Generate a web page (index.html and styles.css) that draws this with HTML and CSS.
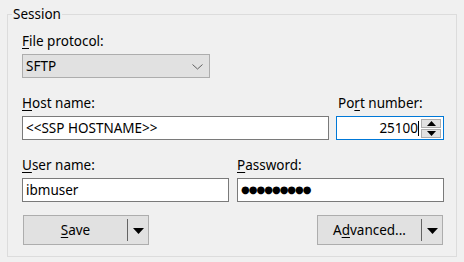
FILE: index.html
```html
<!DOCTYPE html>
<html>
<head>
    <meta charset="UTF-8">
    <title>Session</title>
    <link rel="stylesheet" href="styles.css">
</head>
<body>
    <fieldset class="session">
        <legend>Session</legend>

        <div class="field">
            <label><u>F</u>ile protocol:</label>
            <div class="combo">
                <span>SFTP</span>
                <svg class="chevron" width="11" height="6" viewBox="0 0 11 6"><path d="M0.5 0.5 L5.5 5 L10.5 0.5" fill="none" stroke="#606060" stroke-width="1"/></svg>
            </div>
        </div>

        <div class="row host-row">
            <div class="field">
                <label><u>H</u>ost name:</label>
                <div class="edit">&lt;&lt;SSP HOSTNAME&gt;&gt;</div>
            </div>
            <div class="field">
                <label class="port-label">Po<u>r</u>t number:</label>
                <div class="edit port">
                    <span class="port-value">25100<i class="caret"></i></span>
                    <div class="spin">
                        <div class="spin-btn"><svg width="9" height="5" viewBox="0 0 9 5"><path d="M0 5 L4.5 0 L9 5 Z" fill="#000"/></svg></div>
                        <div class="spin-btn"><svg width="9" height="5" viewBox="0 0 9 5"><path d="M0 0 L4.5 5 L9 0 Z" fill="#000"/></svg></div>
                    </div>
                </div>
            </div>
        </div>

        <div class="row user-row">
            <div class="field">
                <label><u>U</u>ser name:</label>
                <div class="edit">ibmuser</div>
            </div>
            <div class="field">
                <label><u>P</u>assword:</label>
                <div class="edit dots">&#9679;&#9679;&#9679;&#9679;&#9679;&#9679;&#9679;&#9679;&#9679;</div>
            </div>
        </div>

        <div class="buttons">
            <div class="split-btn">
                <span class="btn-main"><u>S</u>ave</span>
                <span class="btn-arrow"><svg width="11" height="6" viewBox="0 0 11 6"><path d="M0 0 L5.5 6 L11 0 Z" fill="#000"/></svg></span>
            </div>
            <div class="split-btn">
                <span class="btn-main">A<u>d</u>vanced...</span>
                <span class="btn-arrow"><svg width="11" height="6" viewBox="0 0 11 6"><path d="M0 0 L5.5 6 L11 0 Z" fill="#000"/></svg></span>
            </div>
        </div>
    </fieldset>
</body>
</html>
```

FILE: styles.css
```css
body {
    margin: 0;
    padding-top: 6px;
    background-color: #f0f0f0;
    font-family: "Noto Sans", "Open Sans", sans-serif;
    font-size: 13.5px;
    color: #000;
}

.session {
    margin: 0 7px 0 7px;
    border: 1px solid #dcdcdc;
    padding: 11px 12px 11px 14px;
}

.session legend {
    padding: 0 1px;
    margin-left: -10px;
    line-height: 16px;
}

label {
    display: block;
    line-height: 16px;
    margin-bottom: 5px;
}

u {
    text-decoration-thickness: 1px;
    text-underline-offset: 2px;
}

.combo {
    width: 188px;
    height: 24px;
    box-sizing: border-box;
    border: 1px solid #adadad;
    background-color: #e1e1e1;
    display: flex;
    align-items: center;
    justify-content: space-between;
    padding: 0 6px 0 3px;
}

.chevron {
    margin-top: 1px;
}

.row {
    display: flex;
    margin-top: 17px;
}

.host-row {
    gap: 7px;
}

.host-row .field:first-child {
    width: 307px;
}

.host-row .field:last-child {
    width: 108px;
}

.port-label {
    padding-left: 2px;
}

.user-row {
    gap: 8px;
}

.user-row .field {
    width: 207px;
}

.edit {
    height: 24px;
    box-sizing: border-box;
    border: 1px solid #7a7a7a;
    background-color: #fff;
    padding: 0 3px;
    line-height: 22px;
    white-space: nowrap;
}

.port {
    border-color: #0078d7;
    display: flex;
    justify-content: flex-end;
    align-items: center;
    padding: 0 2px 0 3px;
}

.port-value {
    position: relative;
    margin-right: 3px;
}

.caret {
    position: absolute;
    right: -1px;
    top: 4px;
    width: 1px;
    height: 15px;
    background-color: #000;
}

.spin {
    display: flex;
    flex-direction: column;
    gap: 1px;
}

.spin-btn {
    width: 20px;
    height: 9px;
    box-sizing: border-box;
    border: 1px solid #adadad;
    background-color: #e1e1e1;
    display: flex;
    align-items: center;
    justify-content: center;
}

.dots {
    font-family: "DejaVu Sans", sans-serif;
    font-size: 10px;
    letter-spacing: -1px;
}

.buttons {
    display: flex;
    justify-content: space-between;
    margin-top: 13px;
    padding-left: 1px;
    padding-right: 1px;
}

.split-btn {
    width: 126px;
    height: 30px;
    box-sizing: border-box;
    border: 1px solid #adadad;
    background-color: #e1e1e1;
    display: flex;
    align-items: center;
}

.btn-main {
    flex: 1;
    text-align: center;
    line-height: 22px;
    border-right: 1px solid #646464;
}

.btn-arrow {
    width: 20px;
    display: flex;
    justify-content: center;
    padding-top: 1px;
}
```
